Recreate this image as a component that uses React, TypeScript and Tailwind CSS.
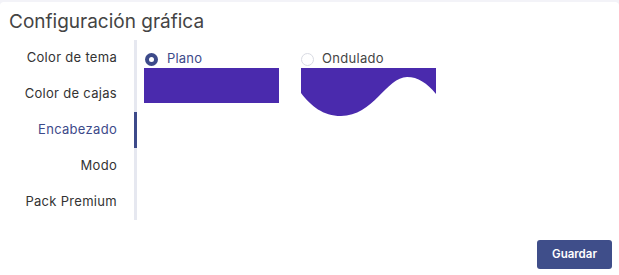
import React, { useState } from "react";

const navItems = ["Color de tema", "Color de cajas", "Encabezado", "Modo", "Pack Premium"];

function Radio({ checked }: { checked: boolean }) {
  return checked ? (
    <span className="w-[13px] h-[13px] rounded-full bg-[#3d4a8a] flex items-center justify-center shrink-0">
      <span className="w-[5px] h-[5px] rounded-full bg-white" />
    </span>
  ) : (
    <span className="w-[13px] h-[13px] rounded-full border border-[#d9dbe3] bg-white shrink-0" />
  );
}

export default function App() {
  const [active, setActive] = useState("Encabezado");
  const [header, setHeader] = useState<"plano" | "ondulado">("plano");

  return (
    <div
      className="w-[619px] h-[275px] bg-[#f3f3f8] pt-[2px] overflow-hidden"
      style={{ fontFamily: "Inter, 'Open Sans', sans-serif" }}
    >
      <div className="h-full bg-white rounded-t-[4px] flex flex-col">
        {/* Title */}
        <h1 className="px-[9px] pt-[8px] text-[19px] leading-[24px] text-[#444]">Configuración gráfica</h1>

        <div className="flex mt-[6px]">
          {/* Nav */}
          <div className="w-[137px] flex flex-col shrink-0">
            {navItems.map((item) => {
              const isActive = item === active;
              return (
                <button
                  key={item}
                  onClick={() => setActive(item)}
                  className={
                    "h-[36px] text-right pr-[17px] text-[13px] tracking-[0.3px] border-r-[3px] " +
                    (isActive ? "text-[#3d4a8a] border-[#3d4a8a]" : "text-[#333] border-[#e6e8f0]")
                  }
                >
                  {item}
                </button>
              );
            })}
          </div>

          {/* Content */}
          <div className="flex gap-[22px] pl-[7px] pt-[11px]">
            <button className="flex flex-col items-start" onClick={() => setHeader("plano")}>
              <div className="flex items-center gap-[9px] h-[16px] pl-[1px]">
                <Radio checked={header === "plano"} />
                <span className="text-[13px] tracking-[0.2px] text-[#3d4a8a]">Plano</span>
              </div>
              <div className="w-[135px] h-[35px] mt-[1px] bg-[#4a2aad]" />
            </button>

            <button className="flex flex-col items-start" onClick={() => setHeader("ondulado")}>
              <div className="flex items-center gap-[8px] h-[16px]">
                <Radio checked={header === "ondulado"} />
                <span className="text-[13px] tracking-[0.3px] text-[#444]">Ondulado</span>
              </div>
              <svg width="135" height="49" viewBox="0 0 135 49" className="mt-[1px]">
                <path
                  d="M0,0 H135 V26 C126,15 117,9 106,9 C86,9 72,48 40,48 C22,48 10,38 0,25 Z"
                  fill="#4a2aad"
                />
              </svg>
            </button>
          </div>
        </div>

        <div className="flex-1" />
        <div className="flex justify-end px-[7px] pb-[6px]">
          <button className="w-[75px] h-[29px] rounded-[3px] bg-[#3f4e8a] text-white text-[11.5px] font-semibold">
            Guardar
          </button>
        </div>
      </div>
    </div>
  );
}
